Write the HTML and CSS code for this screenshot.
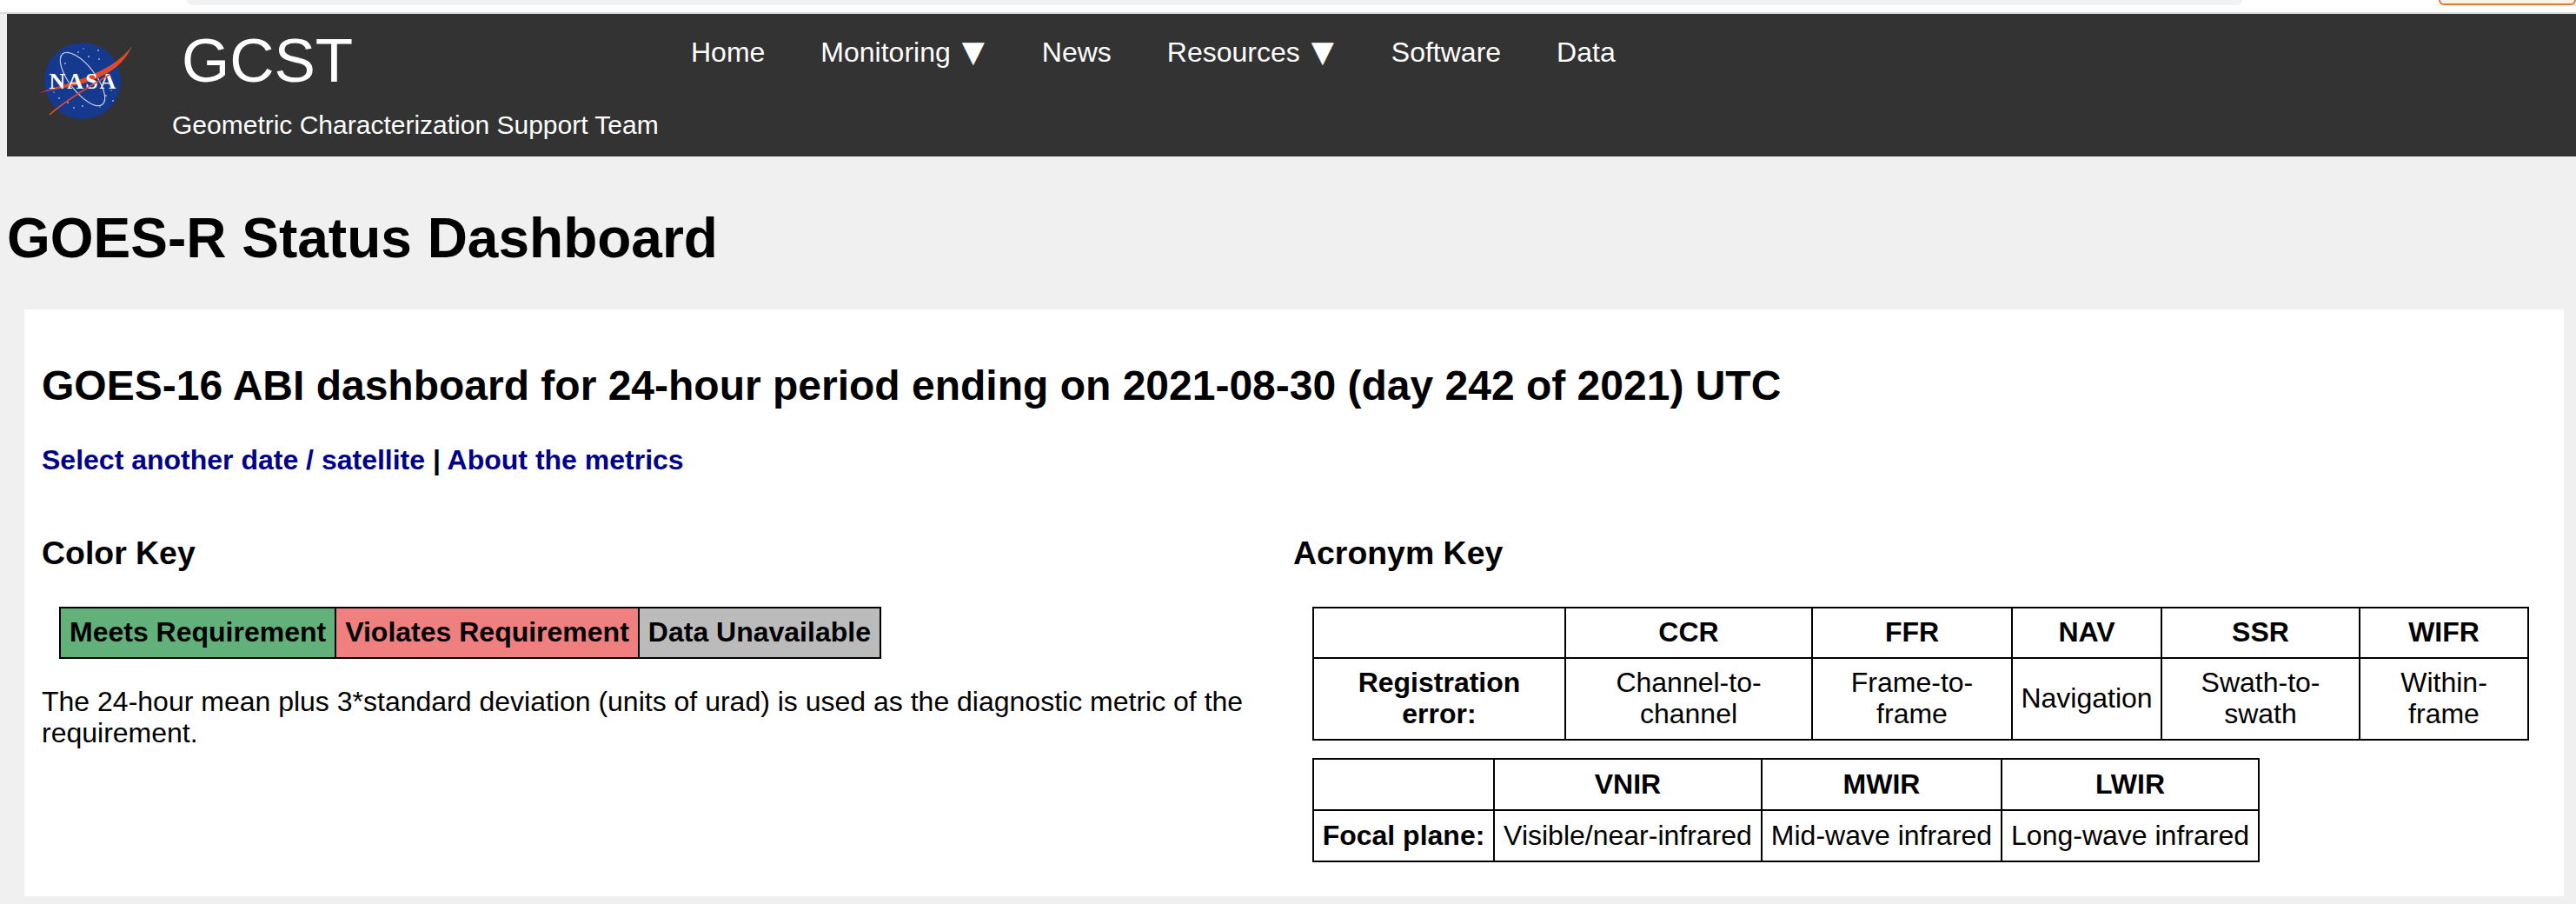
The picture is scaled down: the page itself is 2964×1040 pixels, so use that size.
FILE: index.html
```html
<!DOCTYPE html>
<html lang="en">
<head>
  <meta charset="UTF-8" />
  <title>GOES-R Status Dashboard</title>
  <link rel="stylesheet" href="styles.css">
</head>
<body>
  <div class="topstrip">
    <div class="topstrip-field"></div>
    <div class="topstrip-btn"></div>
  </div>

  <header class="site-header">
    <svg class="logo" viewBox="0 0 130 110" width="130" height="110" aria-label="NASA">
      <circle cx="65" cy="55" r="44" fill="#14398f" />
      <g fill="#9fb4dc">
        <circle cx="60" cy="22" r="1" /><circle cx="72" cy="27" r="1" /><circle cx="83" cy="20" r="1" />
        <circle cx="45" cy="35" r="1" /><circle cx="84" cy="30" r="1" /><circle cx="66" cy="18" r="0.8" />
        <circle cx="38" cy="75" r="1" /><circle cx="48" cy="80" r="1" /><circle cx="55" cy="86" r="1" />
        <circle cx="92" cy="72" r="1" /><circle cx="100" cy="78" r="1" /><circle cx="85" cy="85" r="0.8" />
        <circle cx="65" cy="84" r="1" /><circle cx="98" cy="66" r="0.8" /><circle cx="32" cy="68" r="0.8" />
      </g>
      <ellipse cx="65" cy="53" rx="15" ry="37" transform="rotate(-38 65 53)" fill="none" stroke="#c4cfe6" stroke-width="1.2" />
      <path d="M15 69 C45 57 95 50 122 15 C110 42 85 52 62 59 C47 63 30 65 15 69 Z" fill="#e2492a" />
      <text class="logo-text" x="66" y="64" text-anchor="middle">NASA</text>
      <path d="M27 94 C45 78 68 64 96 48" fill="none" stroke="#e2492a" stroke-width="1.6" />
    </svg>
    <div class="brand">
      <div class="brand-name">GCST</div>
      <div class="brand-sub">Geometric Characterization Support Team</div>
    </div>
    <nav class="nav">
      <a href="#">Home</a>
      <a href="#">Monitoring <span class="caret">▼</span></a>
      <a href="#">News</a>
      <a href="#">Resources <span class="caret">▼</span></a>
      <a href="#">Software</a>
      <a href="#">Data</a>
    </nav>
  </header>

  <h1>GOES-R Status Dashboard</h1>

  <main class="panel">
    <h2>GOES-16 ABI dashboard for 24-hour period ending on 2021-08-30 (day 242 of 2021) UTC</h2>
    <p class="links"><a href="#">Select another date / satellite</a> | <a href="#">About the metrics</a></p>

    <div class="keys">
      <section>
        <h3>Color Key</h3>
        <table class="color-key">
          <tr>
            <td class="meets">Meets Requirement</td>
            <td class="violates">Violates Requirement</td>
            <td class="unavailable">Data Unavailable</td>
          </tr>
        </table>
        <p class="note">The 24-hour mean plus 3*standard deviation (units of urad) is used as the diagnostic metric of the requirement.</p>
      </section>

      <section>
        <h3>Acronym Key</h3>
        <table class="acronyms registration">
          <colgroup>
            <col class="c1"><col class="c2"><col class="c3"><col class="c4"><col class="c5"><col class="c6">
          </colgroup>
          <tr>
            <th></th><th>CCR</th><th>FFR</th><th>NAV</th><th>SSR</th><th>WIFR</th>
          </tr>
          <tr class="tall">
            <th>Registration error:</th>
            <td>Channel-to-channel</td>
            <td>Frame-to-frame</td>
            <td>Navigation</td>
            <td>Swath-to-swath</td>
            <td>Within-frame</td>
          </tr>
        </table>
        <table class="acronyms focal">
          <colgroup>
            <col class="c1"><col class="c2"><col class="c3"><col class="c4">
          </colgroup>
          <tr>
            <th></th><th>VNIR</th><th>MWIR</th><th>LWIR</th>
          </tr>
          <tr>
            <th>Focal plane:</th>
            <td>Visible/near-infrared</td>
            <td>Mid-wave infrared</td>
            <td>Long-wave infrared</td>
          </tr>
        </table>
      </section>
    </div>
  </main>
</body>
</html>
```

FILE: styles.css
```css
body {
  margin: 0;
  background: #f0f0f0;
  color: #000;
  font-family: "Liberation Sans", Arial, sans-serif;
  font-size: 32px;
  line-height: 38px;
}

.topstrip {
  display: flex;
  height: 14px;
  background: #fff;
  border-bottom: 2px solid #dcdcdc;
}

.topstrip-field {
  width: 2365px;
  height: 6px;
  margin-left: 215px;
  background: #f0f2f4;
  border-radius: 0 0 14px 14px;
}

.topstrip-btn {
  box-sizing: border-box;
  width: 158px;
  height: 6px;
  margin-left: 226px;
  background: #fdf1e3;
  border: 2px solid #d97a30;
  border-top: none;
  border-radius: 0 0 16px 16px;
}

.site-header {
  display: flex;
  height: 164px;
  margin-left: 8px;
  background: #333;
  color: #fff;
}

.logo {
  flex: none;
  margin-top: 22px;
  margin-left: 22px;
}

.logo-text {
  font-family: "Liberation Serif", serif;
  font-size: 26px;
  font-weight: 700;
  letter-spacing: 2px;
  fill: #fff;
}

.brand {
  width: 600px;
  margin-left: 39px;
}

.brand-name {
  height: 109px;
  padding: 14px 0 0 10px;
  box-sizing: border-box;
  font-size: 71px;
  line-height: 80px;
}

.brand-sub {
  margin-left: -1px;
  font-size: 30px;
  white-space: nowrap;
}

.nav {
  display: flex;
  align-items: flex-start;
  padding-top: 25px;
  margin-left: -36px;
}

.nav a {
  padding: 0 32px;
  color: #fff;
  text-decoration: none;
  white-space: nowrap;
}

.caret {
  margin-left: 4px;
  margin-right: 2px;
  font-family: "DejaVu Sans", sans-serif;
  font-size: 34px;
  line-height: 30px;
}

h1 {
  margin: 0;
  padding: 52px 0 40px 8px;
  font-size: 64px;
  line-height: 84px;
}

.panel {
  box-sizing: border-box;
  height: 675px;
  margin: 0 14px 0 28px;
  padding: 58px 20px 0;
  background: #fff;
}

h2 {
  margin: 0;
  font-size: 48px;
  line-height: 60px;
}

.links {
  margin: 36px 0 0;
  font-weight: 700;
}

.links a {
  color: #00008b;
  text-decoration: none;
}

.keys {
  display: grid;
  grid-template-columns: 1440px 1fr;
  margin-top: 65px;
}

h3 {
  margin: 0;
  font-size: 37.44px;
  line-height: 46px;
}

table {
  border-collapse: collapse;
}

.color-key {
  margin: 39px 0 0 20px;
  font-weight: 700;
}

.color-key td {
  height: 54px;
  padding: 0 10px 2px;
  border: 2px solid #000;
  white-space: nowrap;
}

.meets {
  background: #62b17a;
}

.violates {
  background: #f08080;
}

.unavailable {
  background: #bbb;
}

.note {
  margin: 31px 0 0;
  line-height: 36px;
}

.acronyms {
  table-layout: fixed;
  margin-left: 22px;
  text-align: center;
  line-height: 36px;
}

.acronyms th,
.acronyms td {
  height: 54px;
  padding: 0 8px 2px;
  border: 2px solid #000;
}

.registration {
  width: 1400px;
  margin-top: 39px;
}

.registration .c1 { width: 290px; }
.registration .c2 { width: 284px; }
.registration .c3 { width: 230px; }
.registration .c4 { width: 172px; }
.registration .c5 { width: 228px; }
.registration .c6 { width: 194px; }

.registration .tall th,
.registration .tall td {
  height: 90px;
}

.focal {
  width: 1090px;
  margin-top: 20px;
}

.focal th,
.focal td {
  height: 55px;
}

.focal .c1 { width: 208px; }
.focal .c2 { width: 308px; }
.focal .c3 { width: 276px; }
.focal .c4 { width: 296px; }
```
